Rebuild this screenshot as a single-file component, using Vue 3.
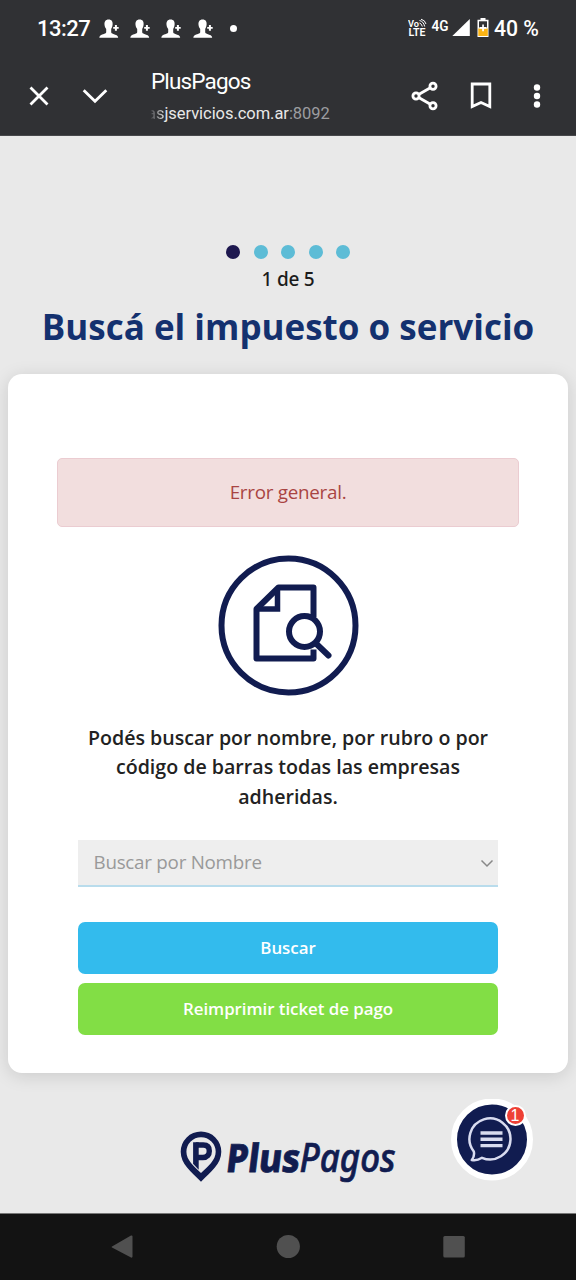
<script setup>
const contacts = [0, 1, 2, 3]
const steps = [1, 2, 3, 4, 5]
const current = 1
</script>

<template>
  <div class="phone">
    <header class="chrome">
      <div class="status">
        <span class="clock">13:27</span>
        <div class="contacts">
          <svg v-for="c in contacts" :key="c" width="20" height="20" viewBox="0 0 20 20" fill="#fff">
            <path d="M9.600 .5c3.200 0 4.300 2.200 4 5.200-.2 2-.8 3-1.400 4.200v3c0 1 .7 1.500 2.100 2 2.800 1 4.700 1.300 4.900 3.900H.3c.2-2.600 2-3 4.700-3.900 1.400-.5 2.200-1 2.200-2v-3C6.300 8.700 5.700 7.700 5.500 5.700 5.300 2.700 6.500.5 9.600.5z" />
            <path d="M15.900 6h2v1.900h1.800v1.900h-1.800v1.900h-2V9.800h-1.700V7.900h1.700z" />
          </svg>
        </div>
        <span class="more-dot"></span>
        <div class="signals">
          <svg width="132" height="24" viewBox="0 0 132 24" fill="#fff" font-family="Roboto, sans-serif">
            <text x="0" y="10.500" font-size="9.500" font-weight="600" textLength="11" lengthAdjust="spacingAndGlyphs">Vo</text>
            <path d="M11.500 4.500q4 .8 5.200 6M11.500 7q2.200.6 2.800 3.500M13 3.200q4.200 1 5 4.800" fill="none" stroke="#fff" stroke-width="1" />
            <text x="0.500" y="19.700" font-size="10.500" font-weight="600" textLength="17" lengthAdjust="spacingAndGlyphs">LTE</text>
            <text x="23.500" y="15" font-size="14.500" font-weight="600" textLength="17" lengthAdjust="spacingAndGlyphs">4G</text>
            <path d="M61.800 3v17H44.300z" />
            <path d="M72.500 2h5v1.800h3v17.200h-11V3.800h3z" />
            <path d="M71 5.300h8v6.200h-8z" fill="#303134" />
            <path d="M70.300 12.500h9.500V20h-9.500z" fill="#fbb414" />
            <path d="M74.200 8.500h1.700v2.600h2.400v1.700h-2.400v2.500h-1.700v-2.500h-2.400v-1.700h2.400z" />
            <text x="86" y="19.800" font-size="22" font-weight="500" textLength="45" lengthAdjust="spacingAndGlyphs">40 %</text>
          </svg>
        </div>
      </div>
      <div class="toolbar">
        <svg class="close" width="20" height="20" viewBox="0 0 20 20"><path d="M1.500 1.500l17 17M18.500 1.500l-17 17" /></svg>
        <svg class="down" width="26" height="16" viewBox="0 0 26 16"><path d="M1.700 2.200L13 13.300 24.300 2.200" /></svg>
        <div class="site">
          <div class="name">PlusPagos</div>
          <div class="url"><span class="fade">as</span>jservicios.com.ar<span class="port">:8092</span></div>
        </div>
        <svg class="share" width="28" height="30" viewBox="0 0 28 30">
          <path d="M5 15L22 5.200M5 15l17 9.800" />
          <g fill="#303134"><circle cx="5" cy="15" r="3.100" /><circle cx="22" cy="5.300" r="3.100" /><circle cx="22" cy="24.700" r="3.100" /></g>
        </svg>
        <svg class="save" width="22" height="27" viewBox="0 0 22 27"><path d="M2.200 2h17.600v22.500L11 20.500l-8.800 4z" /></svg>
        <svg class="menu" width="8" height="24" viewBox="0 0 8 24"><circle cx="4" cy="3.500" r="3.200" /><circle cx="4" cy="12" r="3.200" /><circle cx="4" cy="20.500" r="3.200" /></svg>
      </div>
    </header>

    <main class="page">
      <div class="steps">
        <i v-for="s in steps" :key="s" :class="{ active: s === current }"></i>
      </div>
      <p class="count">{{ current }} de {{ steps.length }}</p>
      <h1>Buscá el impuesto o servicio</h1>

      <section class="card">
        <div class="alert">Error general.</div>
        <svg class="hero" width="142" height="142" viewBox="0 0 142 142" fill="none" stroke="#111c50" stroke-width="6">
          <circle cx="71.500" cy="70.500" r="67" />
          <path d="M96.500 62V32.500H61.500L39.500 54V103.500H96.500v-9" stroke-linejoin="round" />
          <path d="M60.500 33.500v20.500H40" stroke-width="5.500" />
          <circle cx="87.500" cy="76.500" r="15.500" fill="#fff" />
          <path d="M99 88.500l12.500 12" stroke-linecap="round" />
        </svg>
        <p class="intro">Podés buscar por nombre, por rubro o por código de barras todas las empresas adheridas.</p>
        <div class="select">
          <span>Buscar por Nombre</span>
          <svg width="14" height="9" viewBox="0 0 14 9"><path d="M1.500 1.500L7 7l5.500-5.500" /></svg>
        </div>
        <button class="primary">Buscar</button>
        <button class="reprint">Reimprimir ticket de pago</button>
      </section>

      <footer>
        <svg class="brand" width="224" height="60" viewBox="0 0 224 60" fill="#111c50" font-family="'Noto Sans', 'Open Sans', sans-serif">
          <path d="M21 .5A20.300 20.300 0 0 0 .7 20.800C.7 33 11 40.500 21 50.800 31 40.500 41.300 33 41.300 20.800A20.300 20.300 0 0 0 21 .5z" />
          <path d="M21 6.200A14.600 14.600 0 0 0 6.400 20.800c0 8.500 7.500 14.200 14.600 21.200 7.200-7 14.700-12.700 14.700-21.200A14.600 14.600 0 0 0 21 6.200z" fill="#e9e9e9" />
          <path d="M15.800 14h7.500c4.200 0 6 2.300 6 6s-2 6.500-6.500 6.500h-5" fill="none" stroke="#111c50" stroke-width="5.400" />
          <path d="M13.100 11.300h5.600v27.500l-5.600-6z" />
          <text transform="translate(45 40.500) skewX(-7)" font-size="39" font-weight="800" textLength="73.500" lengthAdjust="spacingAndGlyphs" stroke="#111c50" stroke-width=".8">Plus</text>
          <text x="119.500" y="40.500" font-size="39" font-weight="500" font-style="italic" textLength="96" lengthAdjust="spacingAndGlyphs" stroke="#111c50" stroke-width=".7">Pagos</text>
        </svg>
        <div class="chat">
          <svg width="82" height="82" viewBox="0 0 82 82">
            <circle cx="41" cy="40.500" r="38" fill="#111c50" stroke="#fff" stroke-width="6" />
            <path d="M22.800 52.500A20.500 20.500 0 1 1 31 58.800C27.500 61 24 61.700 20.800 61 22.800 58.500 23.700 56.500 22.800 52.500z" fill="none" stroke="#d9dcf0" stroke-width="2.500" stroke-linejoin="round" />
            <path d="M29.500 34h22M29.500 40.300h22M29.500 46.600h22" stroke="#d9dcf0" stroke-width="3.400" />
          </svg>
          <span class="badge">1</span>
        </div>
      </footer>
    </main>

    <nav>
      <svg width="576" height="66" viewBox="0 0 576 66" fill="#505050">
        <path d="M112 32.500l19-11q1.500-.5 1.500 1v20q0 1.500-1.500 1l-19-10q-1-.5 0-1z" />
        <circle cx="288.300" cy="32.500" r="11.600" />
        <rect x="443.300" y="22" width="21.500" height="21.500" rx="1.500" />
      </svg>
    </nav>
  </div>
</template>

<style>
body { margin: 0; background: #e9e9e9; }
</style>

<style scoped>
* { box-sizing: border-box; }
.phone { width: 576px; height: 1280px; display: flex; flex-direction: column; overflow: hidden; background: #e9e9e9; font-family: "Open Sans", "Noto Sans", sans-serif; }
.chrome { height: 136px; background: #303134; color: #fff; font-family: Roboto, sans-serif; border-bottom: 1px solid #47484b; }
.status { height: 56px; display: flex; align-items: center; padding: 0 36px 0 37px; }
.clock { width: 62px; font-size: 22px; font-weight: 500; letter-spacing: -.5px; white-space: nowrap; }
.contacts { display: flex; gap: 11.200px; margin-top: 2px; }
.contacts svg { display: block; }
.more-dot { width: 7px; height: 7px; margin-left: 17px; border-radius: 50%; background: #fff; }
.signals { margin-left: auto; height: 24px; }
.toolbar { height: 79px; display: flex; align-items: center; padding-left: 29px; }
.toolbar > svg { flex: none; fill: none; stroke: #fff; stroke-width: 2.800; }
.down { margin-left: 33px; }
.site { width: 260px; margin-left: 43px; padding-top: 2px; white-space: nowrap; }
.name { font-size: 22.500px; line-height: 30px; letter-spacing: -.85px; }
.url { margin-top: 5px; font-size: 16.500px; line-height: 26px; letter-spacing: -.05px; color: #e8e8e8; }
.fade { display: inline-block; margin-left: -4px; background: linear-gradient(90deg, transparent 4px, #55565a 5px, #ddd); background-clip: text; color: transparent; }
.port { color: #9c9da0; }
.toolbar .save { margin-left: 31px; }
.toolbar .menu { margin-left: 41px; fill: #fff; stroke: none; }
.page { height: 1077px; padding: 109px 8px 0; display: flex; flex-direction: column; }
.steps { display: flex; justify-content: center; gap: 13.500px; }
.steps i { width: 14px; height: 14px; border-radius: 50%; background: #5dbcd6; }
.steps .active { background: #1e184f; }
.count { margin: 6px 0 0; height: 28px; line-height: 28px; font-family: "Noto Sans", "Open Sans", sans-serif; font-size: 19px; letter-spacing: -.25px; font-weight: 500; color: #1c1c1c; text-align: center; }
h1 { margin: 10px 0 0; height: 48px; line-height: 48px; font-size: 35px; font-weight: 700; color: #14316f; text-align: center; white-space: nowrap; }
.card { margin-top: 23px; height: 699px; border-radius: 14px; background: #fff; padding: 84px 49px 0; display: flex; flex-direction: column; box-shadow: 0 3px 18px rgba(0, 0, 0, .13); }
.alert { height: 69px; border: 1px solid #ebccd1; border-radius: 5px; background: #f2dede; color: #a94442; text-align: center; line-height: 66px; font-size: 18.800px; letter-spacing: -.25px; }
.hero { display: block; margin: 28px auto 0; }
.intro { margin: 26px 21px 0; font-size: 19.600px; line-height: 29.300px; font-weight: 600; color: #222; text-align: center; }
.select { margin: 29px 21px 0; height: 47px; display: flex; align-items: center; justify-content: space-between; padding: 0 4px 0 15.500px; background: #eee; border-bottom: 2px solid #b9dcec; color: #999; font-size: 18.800px; letter-spacing: -.25px; }
.select svg { margin-top: 2px; fill: none; stroke: #888; stroke-width: 1.500; }
button { margin: 0 21px; height: 52px; border: 0; border-radius: 7px; color: #fff; font: 600 16.900px "Open Sans", "Noto Sans", sans-serif; letter-spacing: -.05px; padding-bottom: 2px; }
.primary { margin-top: 35px; background: #33bbed; }
.reprint { margin-top: 9px; background: #82de45; }
footer { display: flex; padding-left: 172px; }
.brand { margin-top: 58px; }
.chat { position: relative; width: 82px; height: 82px; margin: 26px 0 0 46.500px; }
.badge { position: absolute; left: 54px; top: 6px; width: 21px; height: 21px; border: 2px solid #fff; border-radius: 50%; background: #ee4035; color: #fff; font: 16px/17px "Liberation Sans", sans-serif; text-align: center; }
nav { height: 67px; background: #131313; border-top: 1px solid #777; }
</style>
